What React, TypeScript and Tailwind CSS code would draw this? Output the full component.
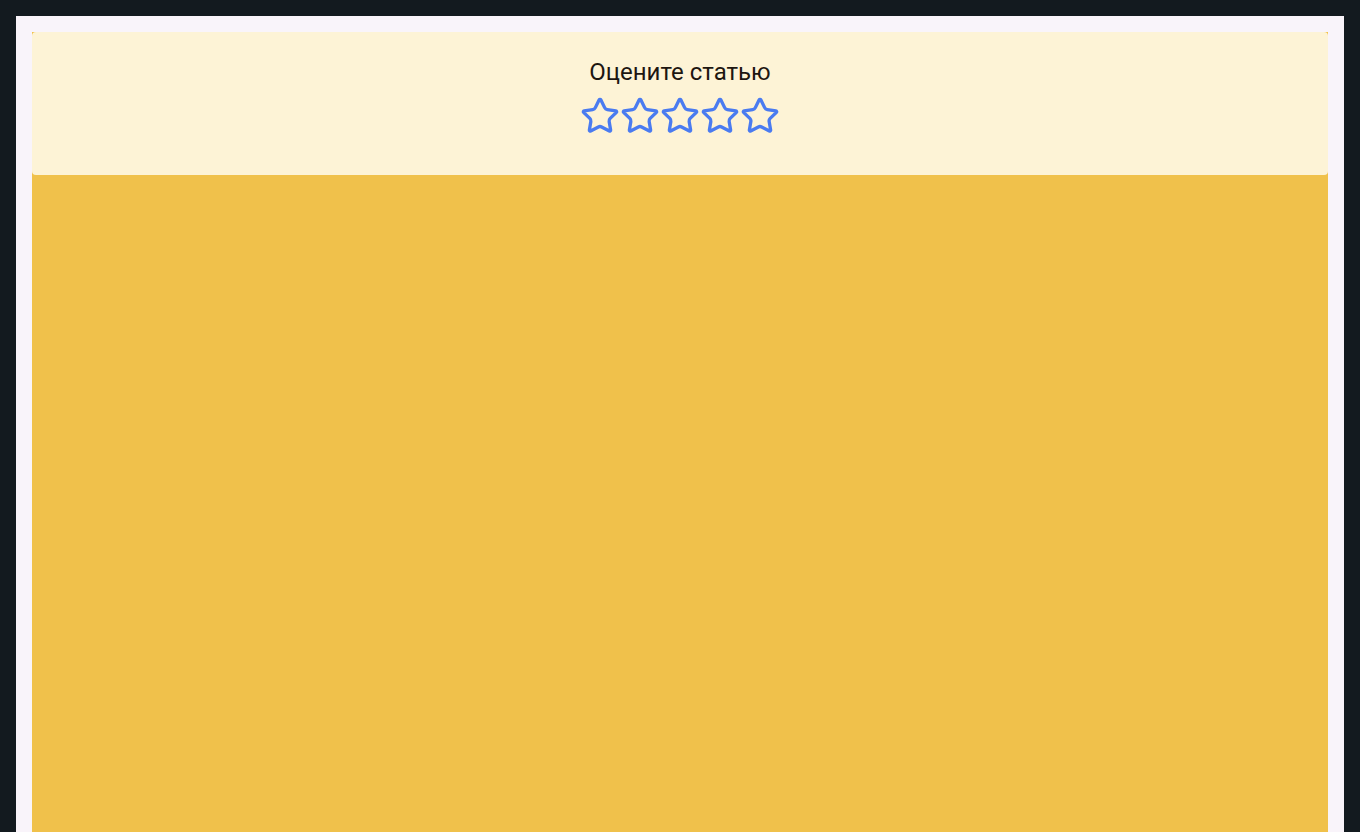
import { Star } from "lucide-react";

export default function App() {
  return (
    <div className="min-h-screen bg-[#131a1f] p-4">
      <div className="min-h-[816px] bg-[#f9f4fa] p-4 pb-0">
        <div className="min-h-[800px] bg-[#f0c14b]">
          <div className="flex flex-col items-center rounded bg-[#fdf3d6] pt-[24px] pb-[39px] font-['Roboto',sans-serif]">
            <h2 className="text-[24px] leading-[32px] text-[#1d1611]">Оцените статью</h2>
            <div className="mt-2 flex">
              {[1, 2, 3, 4, 5].map((n) => (
                <button key={n} className="h-10 w-10 text-[#4a7bf0]">
                  <Star size={40} strokeWidth={2} />
                </button>
              ))}
            </div>
          </div>
        </div>
      </div>
    </div>
  );
}
